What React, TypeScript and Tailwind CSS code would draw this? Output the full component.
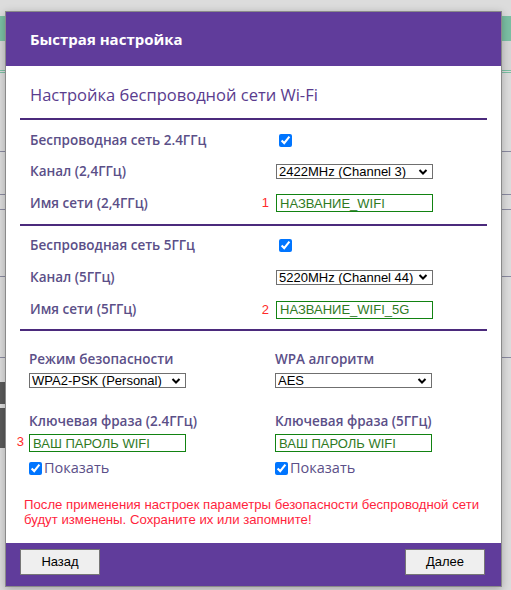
import React from "react";

const labelFont = { fontFamily: '"Open Sans", "Noto Sans", sans-serif' };

function Chevron() {
    return (
        <svg
            className="pointer-events-none absolute right-[5px] top-1/2 h-[8px] w-[10px] -translate-y-1/2"
            viewBox="0 0 10 8"
            fill="none"
        >
            <path d="M1.5 2 L5 5.5 L8.5 2" stroke="#000" strokeWidth="2" />
        </svg>
    );
}

function Select({ value, className }: { value: string; className?: string }) {
    return (
        <div className={`relative ${className ?? ""}`}>
            <select
                defaultValue={value}
                className="block h-[15px] w-full appearance-none border border-[#6f6f6f] bg-white pl-[2px] font-['Liberation_Sans',Arial,sans-serif] text-[13px] leading-[13px] text-black outline-none"
            >
                <option>{value}</option>
            </select>
            <Chevron />
        </div>
    );
}

function TextInput({ value }: { value: string }) {
    return (
        <input
            defaultValue={value}
            className="block h-[18px] w-[157px] border border-[#128312] bg-white px-[3px] font-['Liberation_Sans',Arial,sans-serif] text-[13px] leading-[16px] text-[#2f7a1f] outline-none"
        />
    );
}

function Row({
    label,
    num,
    children,
    h,
}: {
    label: string;
    num?: string;
    children: React.ReactNode;
    h: string;
}) {
    return (
        <div className={`flex items-center ${h}`}>
            <div className="flex w-[246px] items-center justify-between pr-[7px]">
                <span className="text-[13.5px] font-semibold text-[#5b4f88]" style={labelFont}>
                    {label}
                </span>
                {num && (
                    <span className="font-['Liberation_Sans',Arial,sans-serif] text-[13px] text-[#ff2a2a]">
                        {num}
                    </span>
                )}
            </div>
            {children}
        </div>
    );
}

function Check() {
    return (
        <input
            type="checkbox"
            defaultChecked
            className="m-0 h-[13px] w-[13px] accent-[#0075ff]"
        />
    );
}

export default function App() {
    return (
        <div className="relative h-[590px] w-[511px] overflow-hidden bg-[#dcdcdc]">
            {/* page behind the overlay */}
            <div className="mt-[16px] h-[25px] bg-[#7bbfa3]" />
            <div className="h-[29px] bg-[#d6d6d6]" />
            <div className="h-[1px] bg-[#7bbfa3]" />
            <div className="mt-[1px] h-[1px] bg-[#7bbfa3]" />
            <div className="mt-[78px] h-[1px] bg-[#8a8aa0]" />
            <div className="mt-[42px] h-[1px] bg-[#8a8aa0]" />
            <div className="mt-[14px] h-[1px] bg-[#8a8aa0]" />
            <div className="mt-[66px] h-[1px] bg-[#8a8aa0]" />
            <div className="mt-[80px] h-[1px] bg-[#8a8aa0]" />
            <div className="mt-[24px] h-[22px] w-[6px] bg-[#5a5a5a]" />
            <div className="mt-[4px] h-[40px] w-[6px] bg-[#5a5a5a]" />

            {/* modal */}
            <div className="absolute left-[5px] top-[11px] w-[497px] border border-[#8a8a8a] bg-white shadow-[0_2px_8px_rgba(0,0,0,0.25)]">
                <div className="flex h-[54px] items-center bg-[#603c9b] px-[24px]">
                    <span className="text-[15px] font-bold text-white" style={labelFont}>
                        Быстрая настройка
                    </span>
                </div>

                <div className="px-[14px]">
                    <div className="px-[10px] pt-[17px]">
                        <h2 className="text-[16.5px] leading-[24px] text-[#5a3c8e]" style={labelFont}>
                            Настройка беспроводной сети Wi-Fi
                        </h2>
                    </div>
                    <div className="mt-[11px] h-[2px] bg-[#4b2a7c]" />

                    <div className="pl-[10px] pt-[5px]">
                        <Row label="Беспроводная сеть 2.4ГГц" h="h-[31px]">
                            <div className="pl-[3px]">
                                <Check />
                            </div>
                        </Row>
                        <Row label="Канал (2,4ГГц)" h="h-[31px]">
                            <Select value="2422MHz (Channel 3)" className="w-[157px]" />
                        </Row>
                        <Row label="Имя сети (2,4ГГц)" num="1" h="h-[32px]">
                            <TextInput value="НАЗВАНИЕ_WIFI" />
                        </Row>
                    </div>
                    <div className="mt-[5px] h-[2px] bg-[#4b2a7c]" />

                    <div className="pl-[10px] pt-[4px]">
                        <Row label="Беспроводная сеть 5ГГц" h="h-[31px]">
                            <div className="pl-[3px]">
                                <Check />
                            </div>
                        </Row>
                        <Row label="Канал (5ГГц)" h="h-[32px]">
                            <Select value="5220MHz (Channel 44)" className="w-[157px]" />
                        </Row>
                        <Row label="Имя сети (5ГГц)" num="2" h="h-[33px]">
                            <TextInput value="НАЗВАНИЕ_WIFI_5G" />
                        </Row>
                    </div>
                    <div className="mt-[3px] h-[2px] bg-[#4b2a7c]" />

                    <div className="grid grid-cols-[246px_157px] pl-[9px] pt-[18px]">
                        <div>
                            <div className="text-[13.5px] font-semibold leading-[20px] text-[#5b4f88]" style={labelFont}>
                                Режим безопасности
                            </div>
                            <Select value="WPA2-PSK (Personal)" className="mt-[4px] w-[157px]" />
                        </div>
                        <div>
                            <div className="text-[13.5px] font-semibold leading-[20px] text-[#5b4f88]" style={labelFont}>
                                WPA алгоритм
                            </div>
                            <Select value="AES" className="mt-[4px] w-[157px]" />
                        </div>

                        <div className="pt-[23px]">
                            <div className="text-[13.5px] font-semibold leading-[20px] text-[#5b4f88]" style={labelFont}>
                                Ключевая фраза (2.4ГГц)
                            </div>
                            <div className="relative mt-[3px] w-[157px]">
                                <span className="absolute right-full top-[1px] mr-[5px] font-['Liberation_Sans',Arial,sans-serif] text-[13px] leading-[13px] text-[#ff2a2a]">
                                    3
                                </span>
                                <TextInput value="ВАШ ПАРОЛЬ WIFI" />
                            </div>
                            <label className="mt-[9px] flex items-center gap-[2px]">
                                <Check />
                                <span className="text-[14.5px] leading-[14px] text-[#5b4f88]" style={labelFont}>
                                    Показать
                                </span>
                            </label>
                        </div>
                        <div className="pt-[23px]">
                            <div className="text-[13.5px] font-semibold leading-[20px] text-[#5b4f88]" style={labelFont}>
                                Ключевая фраза (5ГГц)
                            </div>
                            <div className="mt-[3px]">
                                <TextInput value="ВАШ ПАРОЛЬ WIFI" />
                            </div>
                            <label className="mt-[9px] flex items-center gap-[2px]">
                                <Check />
                                <span className="text-[14.5px] leading-[14px] text-[#5b4f88]" style={labelFont}>
                                    Показать
                                </span>
                            </label>
                        </div>
                    </div>

                    <p className="pb-[16px] pl-[4px] pt-[22px] font-['Liberation_Sans',Arial,sans-serif] text-[13.2px] leading-[15px] text-[#ff1f3d]">
                        После применения настроек параметры безопасности беспроводной сети будут изменены. Сохраните их или запомните!
                    </p>
                </div>

                <div className="flex h-[43px] items-start justify-between bg-[#603c9b] pl-[14px] pr-[16px] pt-[6px]">
                    <button className="h-[26px] w-[80px] border border-[#767676] bg-[#efefef] font-['Liberation_Sans',Arial,sans-serif] text-[13px] text-black">
                        Назад
                    </button>
                    <button className="h-[26px] w-[80px] border border-[#767676] bg-[#efefef] font-['Liberation_Sans',Arial,sans-serif] text-[13px] text-black">
                        Далее
                    </button>
                </div>
            </div>
        </div>
    );
}
